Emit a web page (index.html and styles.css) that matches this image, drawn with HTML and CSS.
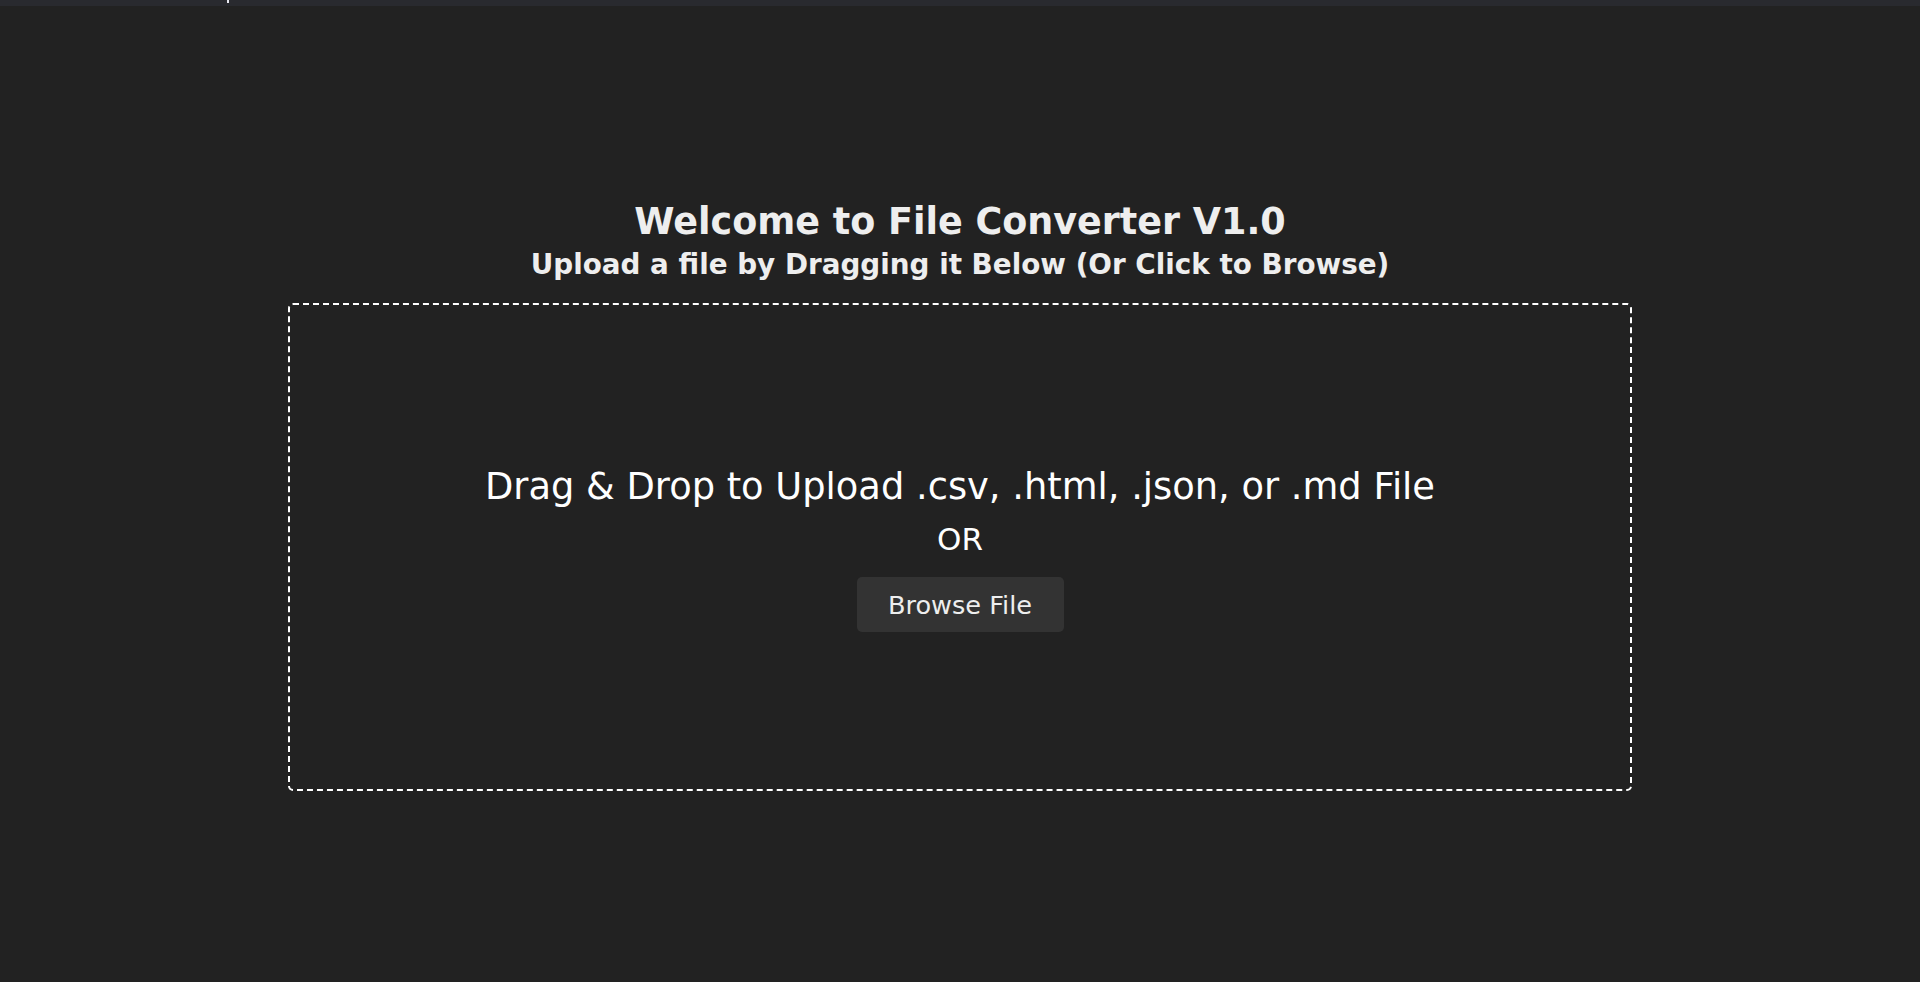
FILE: index.html
```html
<!DOCTYPE html>
<html lang="en">
<head>
<meta charset="utf-8">
<title>File Converter V1.0</title>
<link rel="stylesheet" href="styles.css">
</head>
<body>
<div class="topbar"><span class="caret"></span></div>
<main class="page">
  <h1 class="title">Welcome to File Converter V1.0</h1>
  <h2 class="subtitle">Upload a file by Dragging it Below (Or Click to Browse)</h2>
  <div class="dropzone">
    <p class="drop-text">Drag &amp; Drop to Upload .csv, .html, .json, or .md File</p>
    <p class="or">OR</p>
    <button class="browse" type="button">Browse File</button>
  </div>
</main>
</body>
</html>
```
FILE: styles.css
```css
html, body {
  margin: 0;
  padding: 0;
  background: #222222;
  height: 100%;
}
body {
  font-family: "DejaVu Sans", "Open Sans", sans-serif;
  color: #eeeeee;
  overflow: hidden;
}
.topbar {
  height: 6px;
  background: #292a2f;
  display: flex;
}
.caret {
  width: 2px;
  height: 3px;
  margin-left: 227px;
  background: #e8e8f0;
}
.page {
  display: flex;
  flex-direction: column;
  align-items: center;
  padding-top: 193px;
}
.title {
  margin: 0;
  font-size: 36.5px;
  line-height: 46px;
  font-weight: 700;
  color: #eeeeee;
}
.subtitle {
  margin: 3px 0 0 0;
  font-size: 27.8px;
  line-height: 34px;
  font-weight: 700;
  color: #eeeeee;
}
.dropzone {
  box-sizing: border-box;
  width: 70%;
  height: 488px;
  margin-top: 21px;
  padding-top: 160px;
  border: 2px dashed #ffffff;
  border-radius: 5px;
  display: flex;
  flex-direction: column;
  align-items: center;
}
.drop-text {
  margin: 0;
  font-size: 36.8px;
  line-height: 44px;
  color: #ffffff;
}
.or {
  margin: 12px 0 0 0;
  font-size: 31px;
  line-height: 36px;
  color: #ffffff;
}
.browse {
  margin-top: 20px;
  width: 207px;
  height: 55px;
  border: none;
  border-radius: 5px;
  background: #333333;
  color: #eeeeee;
  font-family: "DejaVu Sans", "Open Sans", sans-serif;
  font-size: 25.6px;
  padding: 0;
}
```
